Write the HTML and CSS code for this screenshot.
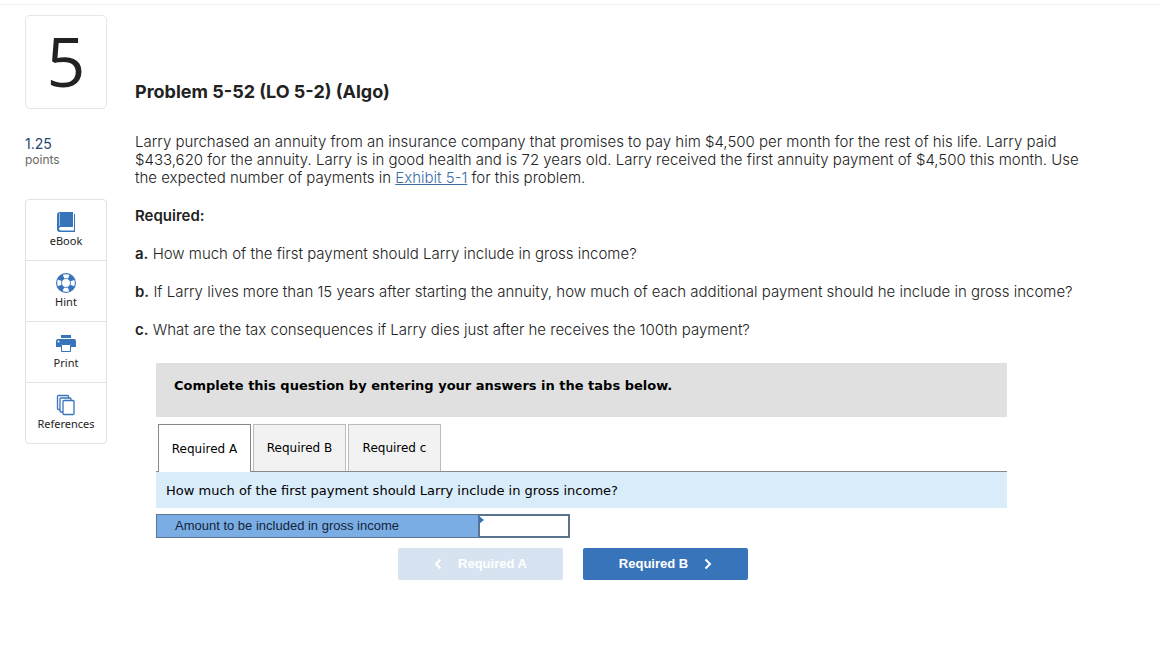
FILE: index.html
```html
<!DOCTYPE html>
<html lang="en">
<head>
<meta charset="utf-8">
<title>Problem 5-52</title>
<meta name="viewport" content="width=device-width">
<link rel="stylesheet" href="styles.css">
</head>
<body>
<div class="page">
<!-- question tools -->
<aside class="side">
    <div class="q-num">5</div>
    <div class="q-points"><b>1.25</b><span>points</span></div>
    <nav class="tools">
        <a href="#ebook">
            <svg width="20" height="22" viewBox="0 0 20 22"><path fill="#3874ba" d="M4 1h13v15H4.500Q3 16 3 17.500T4.500 19.500H18V3h1v18H4Q1 21 1 18V4Q1 1 4 1z"/><path stroke="#9dbde2" d="M3.500 2v13"/></svg>
            eBook
        </a>
        <a href="#hint">
            <svg width="20" height="22" viewBox="0 0 20 22"><circle cx="10" cy="11" r="7" fill="none" stroke="#3874ba" stroke-width="6"/><circle cx="10" cy="11" r="6.800" fill="none" stroke="#fff" stroke-width="4" stroke-dasharray="5.300 5.381" stroke-dashoffset="2.650"/></svg>
            Hint
        </a>
        <a href="#print">
            <svg width="20" height="22" viewBox="0 0 20 22"><path fill="#3874ba" d="M5 2h10v3H5zM2 6h16q2 0 2 2v6h-5v-3H5v3H0V8q0-2 2-2z"/><path fill="#fff" stroke="#3874ba" d="M5.500 11.500h9v7h-9z"/><circle cx="2.500" cy="8.500" r="1" fill="#fff"/></svg>
            Print
        </a>
        <a href="#references">
            <svg width="20" height="22" viewBox="0 0 20 22"><g fill="#fff" stroke="#3874ba" stroke-width="1.300"><rect x="1.500" y="1.500" width="11" height="14" rx="1"/><rect x="4" y="4" width="11" height="14" rx="1"/><rect x="7" y="6.500" width="11" height="14" rx="1"/></g></svg>
            References
        </a>
    </nav>
</aside>

<!-- question -->
<main class="main">
    <h1>Problem 5-52 (LO 5-2) (Algo)</h1>
    <p>Larry purchased an annuity from an insurance company that promises to pay him $4,500 per month for the rest of his life. Larry paid $433,620 for the annuity. Larry is in good health and is 72 years old. Larry received the first annuity payment of $4,500 this month. Use the expected number of payments in <a href="#exhibit">Exhibit 5-1</a> for this problem.</p>
    <p><b>Required:</b></p>
    <p><b>a.</b> How much of the first payment should Larry include in gross income?</p>
    <p><b>b.</b> If Larry lives more than 15 years after starting the annuity, how much of each additional payment should he include in gross income?</p>
    <p><b>c.</b> What are the tax consequences if Larry dies just after he receives the 100th payment?</p>

    <form class="answer">
        <div class="answer-head">Complete this question by entering your answers in the tabs below.</div>
        <div class="tabs">
            <button type="button" class="on">Required A</button>
            <button type="button">Required B</button>
            <button type="button">Required c</button>
        </div>
        <div class="answer-ask">How much of the first payment should Larry include in gross income?</div>
        <div class="entry">
            <label for="amount">Amount to be included in gross income</label>
            <div class="cell"><input type="text" id="amount"></div>
        </div>
        <div class="steps">
            <button type="button" disabled><svg width="8" height="12" viewBox="0 0 8 12"><path d="M6.500 1.500L2 6l4.500 4.500"/></svg>Required A</button>
            <button type="button">Required B<svg width="8" height="12" viewBox="0 0 8 12"><path d="M1.500 1.500L6 6l-4.500 4.500"/></svg></button>
        </div>
    </form>
</main>
</div>
</body>
</html>
```
FILE: styles.css
```css
/* reset */
*{box-sizing:border-box;}
html,body,h1,p,button,input{margin:0;padding:0;}
body{background:#fff;color:#222;font:300 15px/18px Inter,"Open Sans",sans-serif;}
a{color:#3a6ea5;}
svg{display:block;}
.page{display:flex;gap:28px;border-top:1px solid #eee;margin-top:4px;padding:10px 80px 20px 25px;}

/* left column */
.side{flex:none;width:82px;}
.q-num{height:94px;border:1px solid #e6e6e6;border-radius:5px;text-align:center;font:68px/90px "Open Sans",sans-serif;color:#222;}
.q-points{margin-top:27px;font-size:14px;}
.q-points b,.q-points span{display:block;font-weight:400;line-height:16px;}
.q-points b{color:#25476e;}
.q-points span{color:#666;font-size:12px;}
.tools{margin-top:31px;border:1px solid #e2e2e2;border-radius:4px;}
.tools a{display:flex;flex-direction:column;align-items:center;height:61px;padding-top:11px;color:#222;font:11px/16px "Noto Sans",sans-serif;text-decoration:none;}
.tools a:first-child{height:60px;}
.tools a+a{border-top:1px solid #e2e2e2;}

/* question text */
.main{flex:1;min-width:0;padding-top:65px;}
.main h1{font-size:18px;line-height:24px;margin-bottom:29px;color:#222;}
.main p{margin-bottom:20px;}
.main p b{font-weight:600;}

/* answer box */
.answer{margin:24px 74px 0 21px;font:13px/18px "DejaVu Sans",sans-serif;color:#000;}
.answer-head{height:54px;padding:14px 18px;background:#e0e0e0;font-weight:700;}
.tabs{display:flex;gap:2px;margin-top:7px;padding-left:2px;border-bottom:1px solid #888;}
.tabs button{width:93px;height:47px;border:1px solid #bbb;border-bottom:0;background:#f2f2f2;font:12px/18px "DejaVu Sans",sans-serif;color:#000;}
.tabs .on{height:48px;margin-bottom:-1px;border-color:#888;background:#fff;}
.answer-ask{padding:10px 10px 8px;background:#d9ecfa;}
.entry{display:flex;height:24px;margin-top:6px;font:13px/22px "Liberation Sans",sans-serif;}
.entry label{width:322px;padding-left:18px;border:1px solid #5c738f;border-right:0;background:#7aade4;color:#14243a;}
.cell{position:relative;width:92px;}
.cell input{display:block;width:100%;height:100%;padding:0 4px;border:2px solid #5c738f;background:#fff;font:inherit;}
.cell:before{content:"";position:absolute;left:1px;top:2px;border:4px solid transparent;border-left:5px solid #3874ba;border-right:0;}
.steps{display:flex;justify-content:center;gap:20px;margin-top:10px;padding-right:17px;}
.steps button{display:flex;align-items:center;justify-content:center;gap:16px;width:165px;height:32px;border:0;border-radius:2px;background:#3874ba;color:#fff;font:bold 13px/18px "Liberation Sans",sans-serif;}
.steps button:disabled{background:#d7e3f1;}
.steps path{fill:none;stroke:#fff;stroke-width:2;}
```
